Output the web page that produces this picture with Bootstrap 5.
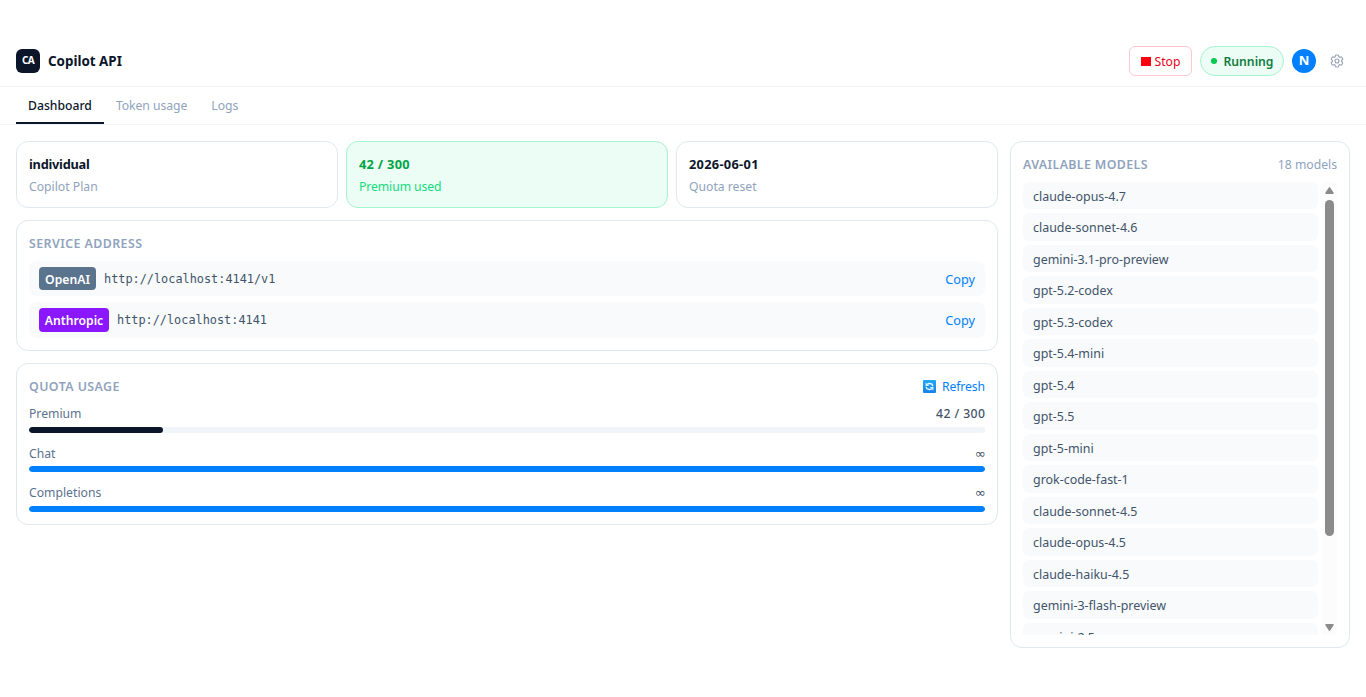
<!DOCTYPE html>
<html lang="en">
<head>
<meta charset="utf-8">
<meta name="viewport" content="width=device-width, initial-scale=1">
<title>Copilot API</title>
<link href="https://cdn.jsdelivr.net/npm/bootstrap@5.3.0/dist/css/bootstrap.min.css" rel="stylesheet">
<script src="https://cdn.jsdelivr.net/npm/bootstrap@5.3.0/dist/js/bootstrap.bundle.min.js" defer></script>
<style>
:root{--ink:#0b162b;--muted:#90a3bd;--mid:#5b728c;--text:#42546a;--line:#e0e8f1;--blue:#0080ff}
body{font-family:"Noto Sans","Open Sans",sans-serif;font-size:12.2px;line-height:21.5px;color:var(--ink);background:#fff;padding-top:36px;height:697px;overflow:hidden}
.topbar{height:51px;border-bottom:1px solid #f1f5f9}
.logo{width:24px;height:24px;border-radius:6px;background:var(--ink);color:#fff;font-size:10px;font-weight:700;letter-spacing:-.6px}
.brand{font-size:13.4px;font-weight:700;padding-top:1px}
.btn-stop{height:30px;width:63px;border:1px solid #ffc9cc;border-radius:6px;color:#ec0014;background:#fff;gap:4px}
.btn-stop i{width:10px;height:9px;background:#ff0010}
.btn-stop span,.state span{padding-top:1px}
.state{height:30px;width:84px;border:1px solid #a4f4cf;background:#ecfdf5;color:#107c41;font-weight:600;gap:6px;padding-left:1px}
.state i{width:6px;height:6px;background:#00c951}
.avatar{width:24px;height:24px;background:var(--blue);color:#fff;font-weight:700;font-size:13px}
.gear{width:26px;height:26px;color:#97a3b4}
.tabs{height:38px;border-bottom:1px solid #f1f5f9}
.tabs a{padding:8px 12px 0;color:var(--muted);text-decoration:none;height:37px;border-bottom:2px solid transparent}
.tabs a+a{letter-spacing:-.05px}
.tabs a.on{color:var(--ink);font-weight:500;border-color:var(--ink)}
.gap12{gap:12px}
.panel{border:1px solid var(--line);border-radius:12px;padding:12px;background:#fff}
.panel.good{background:#ecfdf5;border-color:#a4f4cf}
.stats .panel{flex:1 1 0}
.ln{height:19.5px;white-space:nowrap}
.stat-name{font-size:12.8px;font-weight:700;letter-spacing:-.25px;margin-bottom:2px}
.stat-num{letter-spacing:.3px}
.sub{color:var(--muted)}
.good .stat-name{color:#00a544}.good .sub{color:#10dc7c;letter-spacing:-.08px}
.cap{font-weight:600;font-size:12.4px;color:var(--muted);letter-spacing:.42px}
.models .cap{letter-spacing:.36px}
.addr{background:#f8fafc;border-radius:8px;padding:6px 10px;height:35.5px}
.addr+.addr{margin-top:6px}
.tag{border-radius:4px;color:#fff;font-weight:600;height:23.5px;line-height:25px;text-align:center}
.tag-o{background:#5b748e;width:57px}
.tag-a{background:#8a17ff;width:70px}
.url{font-family:"DejaVu Sans Mono",monospace;font-size:11.87px;color:var(--text);height:19.5px}
.lnk{color:var(--blue);text-decoration:none}
.copy{font-size:12.7px;height:19.5px}
.refresh{height:21.5px;letter-spacing:-.1px}
.refresh svg{margin-right:4px}
.quota{height:29.5px;margin-bottom:10px}
.quota:last-child{margin-bottom:0}
.quota .ln{color:var(--mid)}
.quota .val{color:var(--text);font-weight:500;letter-spacing:.43px;margin-right:-.4px}
.quota .inf{font-family:"DejaVu Sans",sans-serif;font-size:13px;letter-spacing:0;margin-right:-.5px}
.meter{height:6px;border-radius:3px;background:#f1f5f9;margin-top:4px;overflow:hidden}
.meter div{height:6px;border-radius:3px;background:var(--blue)}
.meter .dark{background:var(--ink)}
.models{width:340px;height:507px}
.list{height:453.5px;overflow:hidden;gap:4px;width:295px}
.list div{background:#f8fafc;border-radius:6px;padding:4px 10px 0;color:var(--text);flex:0 0 27.5px;font-size:12.45px;white-space:nowrap}
.track{width:15px;height:453.5px;background:#fcfcfc;padding:4px 0 3px}
.thumb{width:9px;height:336px;border-radius:5px;background:#8b8b8b;margin-top:5px}
</style>
</head>
<body>
<header class="topbar px-3 d-flex align-items-center justify-content-between">
  <div class="d-flex align-items-center gap-2">
    <span class="logo d-flex align-items-center justify-content-center">CA</span>
    <span class="brand">Copilot API</span>
  </div>
  <div class="d-flex align-items-center gap-2">
    <button class="btn-stop d-flex align-items-center justify-content-center p-0"><i></i><span>Stop</span></button>
    <span class="state rounded-pill d-flex align-items-center justify-content-center"><i class="rounded-circle"></i><span>Running</span></span>
    <span class="avatar rounded-circle d-flex align-items-center justify-content-center">N</span>
    <span class="gear d-flex align-items-center justify-content-center">
      <svg width="16" height="16" viewBox="0 0 24 24" fill="none" stroke="currentColor" stroke-width="1.700" stroke-linejoin="round"><path d="M9.6 3.9c.1-.5.6-.9 1.100-.9h2.600c.5 0 1 .4 1.100.9l.2 1.300c.1.400.300.700.600.900l.3.200c.3.200.7.200 1.100.1l1.200-.5c.5-.2 1.100 0 1.400.5l1.300 2.200c.3.500.2 1.100-.3 1.400l-1 .8c-.3.300-.4.600-.4 1v.4c0 .4.1.700.4 1l1 .8c.4.400.5 1 .3 1.400l-1.300 2.200c-.3.500-.9.700-1.400.5l-1.200-.5c-.4-.1-.8-.1-1.100.1l-.3.200c-.3.200-.5.500-.6.900l-.2 1.300c-.1.500-.6.900-1.100.9h-2.600c-.5 0-1-.4-1.100-.9l-.2-1.300c-.1-.4-.3-.7-.6-.9l-.3-.2c-.3-.2-.7-.2-1.100-.1l-1.200.5c-.5.200-1.100 0-1.400-.5l-1.300-2.200c-.3-.5-.2-1.100.3-1.400l1-.8c.3-.3.4-.6.4-1v-.4c0-.4-.1-.7-.4-1l-1-.8c-.4-.4-.5-1-.3-1.400l1.300-2.200c.3-.5.9-.7 1.400-.5l1.200.5c.4.1.8.1 1.100-.1l.3-.2c.3-.2.5-.5.6-.9z"/><circle cx="12" cy="12" r="3"/></svg>
    </span>
  </div>
</header>
<nav class="tabs px-3 d-flex"><a class="on" href="#">Dashboard</a><a href="#">Token usage</a><a href="#">Logs</a></nav>
<main class="p-3 d-flex align-items-start gap12">
  <div class="d-flex flex-column flex-grow-1 gap12">
    <section class="stats d-flex gap-2">
      <div class="panel"><div class="ln stat-name">individual</div><div class="ln sub">Copilot Plan</div></div>
      <div class="panel good"><div class="ln stat-name stat-num">42 / 300</div><div class="ln sub">Premium used</div></div>
      <div class="panel"><div class="ln stat-name stat-num">2026-06-01</div><div class="ln sub">Quota reset</div></div>
    </section>
    <section class="panel">
      <div class="ln cap mb-2">SERVICE ADDRESS</div>
      <div class="addr d-flex align-items-center gap-2"><span class="tag tag-o">OpenAI</span><span class="url flex-grow-1">http://localhost:4141/v1</span><a class="lnk copy" href="#">Copy</a></div>
      <div class="addr d-flex align-items-center gap-2"><span class="tag tag-a">Anthropic</span><span class="url flex-grow-1">http://localhost:4141</span><a class="lnk copy" href="#">Copy</a></div>
    </section>
    <section class="panel">
      <div class="ln d-flex justify-content-between mb-2">
        <span class="cap">QUOTA USAGE</span>
        <a class="lnk refresh d-flex align-items-center" href="#">
          <svg width="15" height="13" viewBox="0 0 15 13"><defs><linearGradient id="rf" x1="0" y1="0" x2="0" y2="1"><stop offset="0" stop-color="#1fa8f8"/><stop offset="1" stop-color="#1583e6"/></linearGradient></defs><rect width="13" height="13" rx="1" fill="url(#rf)"/><g fill="none" stroke="#e4f4ff" stroke-width="1.300"><path d="M4.300 4.300Q5.200 3.500 6.600 3.500Q9.600 3.500 9.800 6.200"/><path d="M8.700 8.700Q7.800 9.500 6.400 9.500Q3.400 9.500 3.200 6.800"/></g><path d="M2.600 2.400V6H6.200zM10.400 10.600V7H6.800z" fill="#e4f4ff"/></svg>Refresh</a>
      </div>
      <div class="quota"><div class="ln d-flex justify-content-between"><span>Premium</span><span class="val">42 / 300</span></div><div class="meter"><div class="dark" style="width:14%"></div></div></div>
      <div class="quota"><div class="ln d-flex justify-content-between"><span>Chat</span><span class="val inf">∞</span></div><div class="meter"><div style="width:100%"></div></div></div>
      <div class="quota"><div class="ln d-flex justify-content-between"><span>Completions</span><span class="val inf">∞</span></div><div class="meter"><div style="width:100%"></div></div></div>
    </section>
  </div>
  <aside class="panel models">
    <div class="ln d-flex justify-content-between mb-2"><span class="cap">AVAILABLE MODELS</span><span class="sub">18 models</span></div>
    <div class="d-flex justify-content-between">
      <div class="list d-flex flex-column"><div>claude-opus-4.7</div><div>claude-sonnet-4.6</div><div>gemini-3.1-pro-preview</div><div>gpt-5.2-codex</div><div>gpt-5.3-codex</div><div>gpt-5.4-mini</div><div>gpt-5.4</div><div>gpt-5.5</div><div>gpt-5-mini</div><div>grok-code-fast-1</div><div>claude-sonnet-4.5</div><div>claude-opus-4.5</div><div>claude-haiku-4.5</div><div>gemini-3-flash-preview</div><div>gemini-2.5-pro</div></div>
      <div class="track d-flex flex-column align-items-center">
        <svg width="9" height="9" viewBox="0 0 9 9"><path d="M4.500 1.800L8 7.200H1z" fill="#8b8b8b" stroke="#8b8b8b" stroke-width="1.500" stroke-linejoin="round"/></svg>
        <div class="thumb"></div>
        <svg class="mt-auto" width="9" height="9" viewBox="0 0 9 9"><path d="M4.500 7.200L8 1.800H1z" fill="#8b8b8b" stroke="#8b8b8b" stroke-width="1.500" stroke-linejoin="round"/></svg>
      </div>
    </div>
  </aside>
</main>
</body>
</html>
